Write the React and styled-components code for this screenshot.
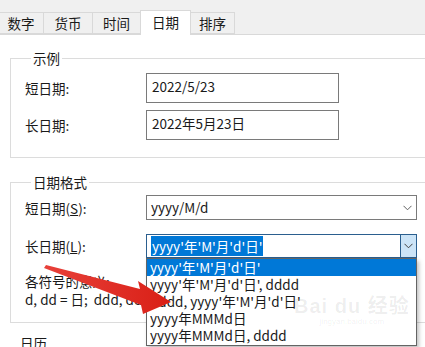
import React from "react";
import styled, { createGlobalStyle } from "styled-components";

const Global = createGlobalStyle`
  html, body {
    margin: 0;
    padding: 0;
    background: #ffffff;
    overflow: hidden;
  }
  body {
    font-family: "Noto Sans CJK SC", "Noto Sans", sans-serif;
    font-size: 13px;
    color: #1a1a1a;
  }
`;

const Window = styled.div`
  position: relative;
  width: 425px;
  height: 347px;
  overflow: hidden;
  background: #ffffff;
`;

const TabBar = styled.div`
  display: flex;
  align-items: flex-end;
  height: 34px;
  background: #f0f0f0;
  border-bottom: 1px solid #d9d9d9;
`;

const Tab = styled.div`
  box-sizing: border-box;
  width: ${(p) => p.w}px;
  height: ${(p) => (p.active ? 25 : 22)}px;
  margin-bottom: ${(p) => (p.active ? -1 : 0)}px;
  display: flex;
  align-items: center;
  justify-content: center;
  background: ${(p) => (p.active ? "#ffffff" : "#f0f0f0")};
  border: 1px solid #d9d9d9;
  border-bottom: ${(p) => (p.active ? "none" : "1px solid #d9d9d9")};
  border-left: ${(p) => (p.first ? "none" : "1px solid #d9d9d9")};
  margin-left: -1px;
  position: relative;
  z-index: ${(p) => (p.active ? 1 : 0)};
  padding-bottom: ${(p) => (p.active ? 3 : 0)}px;
  font-size: 13.5px;
  color: #1a1a1a;
`;

const Body = styled.div`
  padding: 15px 0 0 10px;
`;

const Group = styled.fieldset`
  margin: 0 -10px ${(p) => p.gap || 0}px 0;
  padding: 0 0 ${(p) => p.pb}px 14px;
  border: 1px solid #dcdcdc;
  border-right: none;
  min-width: 0;
`;

const Caption = styled.legend`
  padding: 0 2px;
  margin-left: 6px;
  line-height: 17px;
  font-size: 13.5px;
  color: #1a1a1a;
`;

const Rows = styled.div`
  display: grid;
  grid-template-columns: 121px auto;
  align-items: center;
  row-gap: ${(p) => p.rowGap}px;
  padding-top: ${(p) => p.pt}px;
`;

const Label = styled.span`
  font-size: 13.5px;
  line-height: 18px;
  u {
    text-decoration: underline;
  }
`;

const TextBox = styled.div`
  box-sizing: border-box;
  width: 193px;
  height: 30px;
  border: 1px solid #7a7a7a;
  padding: 3px 0 0 5px;
  font-size: 13.5px;
  line-height: 18px;
`;

const ComboWrap = styled.div`
  position: relative;
  width: 271px;
`;

const Combo = styled.div`
  box-sizing: border-box;
  display: flex;
  align-items: center;
  height: ${(p) => p.h}px;
  border: 1px solid ${(p) => (p.focused ? "#2b5f8f" : "#7a7a7a")};
  padding-left: 3px;
  font-size: 13.5px;
`;

const ComboText = styled.span`
  flex: 1;
  line-height: 17px;
  padding: 0 1px;
`;

const Selected = styled.span`
  background: #0078d7;
  color: #ffffff;
  padding: 0 1px;
  line-height: 18px;
`;

const Arrow = styled.div`
  box-sizing: border-box;
  width: 17px;
  align-self: stretch;
  display: flex;
  align-items: center;
  justify-content: center;
  background: ${(p) => (p.focused ? "#cce4f7" : "transparent")};
  border: ${(p) => (p.focused ? "1px solid #2b5f8f" : "none")};
  margin: ${(p) => (p.focused ? "-1px -1px -1px 0" : "0")};
`;

const DropList = styled.ul`
  position: absolute;
  top: 100%;
  left: 0;
  width: 271px;
  box-sizing: border-box;
  margin: 0;
  padding: 0 0 1px;
  list-style: none;
  background: #ffffff;
  border: 1px solid #646464;
  box-shadow: 2px 3px 4px rgba(0, 0, 0, 0.25);
  z-index: 5;
`;

const Item = styled.li`
  height: 17px;
  line-height: 17px;
  padding-left: 3px;
  font-size: 13.5px;
  background: ${(p) => (p.active ? "#0078d7" : "transparent")};
  color: ${(p) => (p.active ? "#ffffff" : "#1a1a1a")};
`;

const Notes = styled.div`
  padding-top: 14px;
  font-size: 13.5px;
  line-height: 18px;
`;

const Next = styled.div`
  padding: 12px 0 0 10px;
  font-size: 13.5px;
  line-height: 17px;
`;

const Watermark = styled.div`
  position: absolute;
  left: 294px;
  top: 296px;
  color: rgba(0, 0, 0, 0.07);
  text-align: center;
  font-family: "Liberation Sans", "Noto Sans CJK SC", sans-serif;
  z-index: 6;
  pointer-events: none;
`;

const MarkBig = styled.div`
  font-size: 20px;
  font-weight: 700;
  line-height: 20px;
  letter-spacing: 1px;
`;

const MarkSmall = styled.div`
  font-size: 8px;
  line-height: 12px;
`;

const Overlay = styled.svg`
  position: absolute;
  left: 0;
  top: 0;
  z-index: 10;
  pointer-events: none;
`;

const Chevron = ({ color = "#606060" }) => (
  <svg width="9" height="6" viewBox="0 0 9 6">
    <path d="M0.5 0.8 L4.5 4.8 L8.5 0.8" fill="none" stroke={color} strokeWidth="1" />
  </svg>
);

const tabs = [
  { name: "数字", w: 45, first: true },
  { name: "货币", w: 50 },
  { name: "时间", w: 49 },
  { name: "日期", w: 51, active: true },
  { name: "排序", w: 45 },
];

const options = [
  "yyyy'年'M'月'd'日'",
  "yyyy'年'M'月'd'日', dddd",
  "dddd, yyyy'年'M'月'd'日'",
  "yyyy年MMMd日",
  "yyyy年MMMd日, dddd",
];

export default function App() {
  return (
    <Window>
      <Global />
      <TabBar>
        {tabs.map((t) => (
          <Tab key={t.name} w={t.w} active={t.active} first={t.first}>
            {t.name}
          </Tab>
        ))}
      </TabBar>
      <Body>
        <Group pb={17} gap={16}>
          <Caption>示例</Caption>
          <Rows rowGap={7} pt={6}>
            <Label>短日期:</Label>
            <TextBox>2022/5/23</TextBox>
            <Label>长日期:</Label>
            <TextBox>2022年5月23日</TextBox>
          </Rows>
        </Group>
        <Group pb={14}>
          <Caption>日期格式</Caption>
          <Rows rowGap={14} pt={4}>
            <Label>
              短日期(<u>S</u>):
            </Label>
            <ComboWrap>
              <Combo h={25}>
                <ComboText>yyyy/M/d</ComboText>
                <Arrow>
                  <Chevron />
                </Arrow>
              </Combo>
            </ComboWrap>
            <Label>
              长日期(<u>L</u>):
            </Label>
            <ComboWrap>
              <Combo h={24} focused>
                <ComboText>
                  <Selected>{options[0]}</Selected>
                </ComboText>
                <Arrow focused>
                  <Chevron color="#404040" />
                </Arrow>
              </Combo>
              <DropList>
                {options.map((o, i) => (
                  <Item key={o} active={i === 0}>
                    {o}
                  </Item>
                ))}
              </DropList>
            </ComboWrap>
          </Rows>
          <Notes>
            <div>各符号的意义:</div>
            <div>d, dd = 日;&nbsp;&nbsp;ddd, dddd = 星期;&nbsp;&nbsp;M = 月;&nbsp;&nbsp;y = 年</div>
          </Notes>
        </Group>
        <Next>日历</Next>
      </Body>
      <Watermark>
        <MarkBig>Bai du 经验</MarkBig>
        <MarkSmall>jingyan.baidu.com</MarkSmall>
      </Watermark>
      <Overlay width="425" height="347" viewBox="0 0 425 347">
        <defs>
          <linearGradient id="arr" x1="0" y1="0" x2="1" y2="0">
            <stop offset="0" stopColor="#e8413a" />
            <stop offset="1" stopColor="#d91f16" />
          </linearGradient>
        </defs>
        <path
          d="M44 268 L46 265 L140 289 L138 281 L171 302 L143 314 L141 305 Z"
          fill="url(#arr)"
        />
      </Overlay>
    </Window>
  );
}
